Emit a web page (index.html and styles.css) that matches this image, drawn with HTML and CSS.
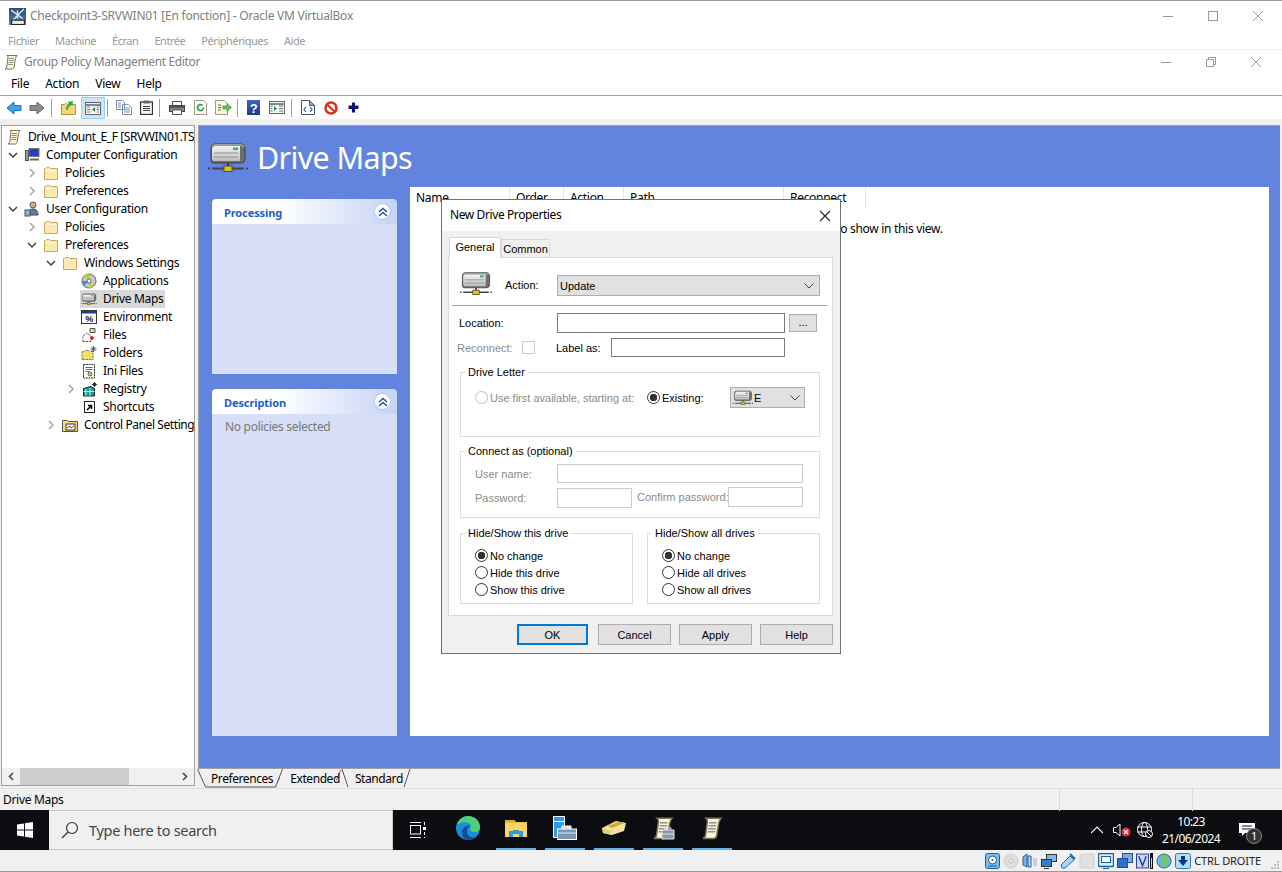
FILE: index.html
```html
<!DOCTYPE html>
<html lang="en">
<head>
<meta charset="utf-8">
<title>Drive Maps</title>
<link rel="stylesheet" href="styles.css">
</head>
<body>
<svg class="defs" width="0" height="0">
  <defs>
    <linearGradient id="drive-face" x1="0" y1="0" x2="0" y2="1"><stop offset="0" stop-color="#f4f4f4"/><stop offset="1" stop-color="#bdbdbd"/></linearGradient>
    <linearGradient id="logo-sky" x1="0" y1="0" x2="0" y2="1"><stop offset="0" stop-color="#2d4a6e"/><stop offset="1" stop-color="#4a7fb0"/></linearGradient>
    <linearGradient id="help-blue" x1="0" y1="0" x2="0" y2="1"><stop offset="0" stop-color="#3f62c4"/><stop offset="1" stop-color="#1d3a8f"/></linearGradient>
    <symbol id="drive" viewBox="0 0 40 30">
      <path d="M3 6q0-4 4-4h26q4 0 4 4v11q0 4-4 4H6q-3 0-3-3z" fill="#6f6f6f" stroke="#3c3c3c"/>
      <path d="M4 7q0-3 3-3h25v15H6q-2 0-2-2z" fill="url(#drive-face)"/>
      <path d="M4 5q1-2 3-2h26q2 0 3 2" fill="none" stroke="#9c9c9c" stroke-width="2"/>
      <path d="M6 11h24M6 15h24" stroke="#8f8f8f"/>
      <rect x="25" y="5.500" width="5" height="2.500" fill="#1fc24a"/>
      <path d="M20 21v4" stroke="#333" stroke-width="2"/>
      <path d="M0 26.500h2M4 26.500h32M38 26.500h2" stroke="#444" stroke-width="2"/>
      <rect x="16" y="24" width="8" height="5.500" fill="#d8c030" stroke="#5f5010"/>
    </symbol>
    <symbol id="folder" viewBox="0 0 16 16">
      <path d="M1.500 14.500v-11h1l1-1h3l1 1h7v11z" fill="#fbe9b0" stroke="#c9a95c"/>
      <path d="M2 5.500h12" stroke="#fff6d5"/>
    </symbol>
    <symbol id="scroll" viewBox="0 0 16 16">
      <path d="M4 1.500h10c-1 1-1 2-1.500 3L11 13.500c-.3 1-1 1.500-2 1.500H2c1-.5 1.500-1 1.700-2L5 3.500C5 2.500 4.600 2 4 1.500z" fill="#fbf5d8" stroke="#7a7658"/>
      <path d="M6 4.500h5M5.700 6.500h5M5.400 8.500h5M5.100 10.500h5" stroke="#8f8f8f"/>
    </symbol>
    <symbol id="twist-open" viewBox="0 0 16 16">
      <path d="M4 6l4 4 4-4" fill="none" stroke="#404040" stroke-width="1.500"/>
    </symbol>
    <symbol id="twist-closed" viewBox="0 0 16 16">
      <path d="M6 4l4 4-4 4" fill="none" stroke="#a6a6a6" stroke-width="1.500"/>
    </symbol>
  </defs>
</svg>

<div class="screen">
  <header class="vb-title">
    <svg class="vb-logo" viewBox="0 0 16 16" width="17" height="17"><rect width="16" height="16" fill="url(#logo-sky)"/><path d="M2 2l11 8M14 1L4 11M8 2v8" stroke="#d3e6f7" stroke-width="1.300"/><rect x="2" y="11" width="13" height="5" fill="#222"/><rect x="3" y="12" width="11" height="3" fill="#e8e8e8"/></svg>
    <span class="vb-name">Checkpoint3-SRVWIN01 [En fonction] - Oracle VM VirtualBox</span>
    <div class="win-btns vb-btns">
      <svg viewBox="0 0 12 12" width="12" height="12"><path d="M1 6.500h10" stroke="#999"/></svg>
      <svg viewBox="0 0 12 12" width="12" height="12"><rect x="1.500" y="1.500" width="9" height="9" fill="none" stroke="#999"/></svg>
      <svg viewBox="0 0 12 12" width="12" height="12"><path d="M1 1l10 10M11 1L1 11" stroke="#999"/></svg>
    </div>
  </header>
  <nav class="vb-menu">
    <span>Fichier</span><span>Machine</span><span>Écran</span><span>Entrée</span><span>Périphériques</span><span>Aide</span>
  </nav>

  <header class="gp-title">
    <svg width="16" height="16"><use href="#scroll"/></svg>
    <span class="gp-name">Group Policy Management Editor</span>
    <div class="win-btns gp-btns">
      <svg viewBox="0 0 12 12" width="12" height="12"><path d="M1 6.500h10" stroke="#999"/></svg>
      <svg viewBox="0 0 12 12" width="12" height="12"><path d="M1.500 3.500h7v7h-7zM3.500 3.500v-2h7v7h-2" fill="none" stroke="#999"/></svg>
      <svg viewBox="0 0 12 12" width="12" height="12"><path d="M1 1l10 10M11 1L1 11" stroke="#999"/></svg>
    </div>
  </header>
  <nav class="gp-menu">
    <span>File</span><span>Action</span><span>View</span><span>Help</span>
  </nav>

  <div class="toolbar">
    <span class="tb t1"><svg viewBox="0 0 16 14" width="16" height="14"><path d="M8 1L1 7l7 6V9.500h7v-5H8z" fill="#3fa5ea" stroke="#1f6fb5"/></svg></span>
    <span class="tb t2"><svg viewBox="0 0 16 14" width="16" height="14"><path d="M8 1l7 6-7 6V9.500H1v-5h7z" fill="#8c8c8c" stroke="#666"/></svg></span>
    <i class="tsep"></i>
    <span class="tb t3"><svg viewBox="0 0 15 15" width="15" height="15"><path d="M.5 14.500v-10h3l1-1h1l1 1h8v10z" fill="#f3d67a" stroke="#b4923f"/><path d="M5 10c0-3 1-5 3-6L6.500 2 12 1l-.5 5L10 5C8 6 7 8 6.500 10z" fill="#37a84a"/></svg></span>
    <span class="tb t4"><svg viewBox="0 0 16 13" width="16" height="13"><rect x=".5" y=".5" width="15" height="12" fill="#f4f4f4" stroke="#666"/><path d="M.5 3h15" stroke="#7a8a9a" stroke-width="2"/><path d="M10 5L7 7.500 10 10z" fill="#2e8b57"/><path d="M2 5h3M2 7.500h3M2 10h3M12 5h2M12 7.500h2M12 10h2" stroke="#777"/></svg></span>
    <i class="tsep"></i>
    <span class="tb t5"><svg viewBox="0 0 16 15" width="16" height="15"><path d="M.5.500h6l2 2v7h-8zM6.500 4.500h6l3 3v7h-9z" fill="#fff" stroke="#7f8ea3"/><path d="M2 3h3M2 5h3M2 7h3M8 8h6M8 10h6M8 12h6" stroke="#6a9bc8"/></svg></span>
    <span class="tb t6"><svg viewBox="0 0 13 15" width="13" height="15"><rect x=".5" y="2" width="12" height="12.500" fill="#f7f7f7" stroke="#333" stroke-width="1.300"/><rect x="3.500" y=".5" width="6" height="3" fill="#666"/><path d="M3 6.500h7M3 8.500h7M3 10.500h7" stroke="#444"/></svg></span>
    <i class="tsep"></i>
    <span class="tb t7"><svg viewBox="0 0 16 14" width="16" height="14"><rect x="3.500" y=".5" width="9" height="4" fill="#fff" stroke="#555"/><rect x=".5" y="4.500" width="15" height="6" fill="#8a8a8a" stroke="#444"/><path d="M1 6h14" stroke="#555" stroke-width="2"/><rect x="3.500" y="9" width="9" height="4.500" fill="#fff" stroke="#555"/></svg></span>
    <span class="tb t8"><svg viewBox="0 0 13 15" width="13" height="15"><path d="M.5.500h9l3 3v11H.5z" fill="#fff" stroke="#9c9c7c"/><path d="M9.500 7.500a3 3 0 1 1-1-2.200" fill="none" stroke="#2f9e44" stroke-width="1.700"/></svg></span>
    <span class="tb t9"><svg viewBox="0 0 17 15" width="17" height="15"><path d="M.5.500h9l3 3v11H.5z" fill="#fbf6d9" stroke="#9c9c7c"/><path d="M3 5h3M3 7.500h3M3 10h3" stroke="#666"/><path d="M8 6h4V3.500l4.500 4-4.500 4V9H8z" fill="#5fbf5a" stroke="#3d8f3a" stroke-width=".6"/></svg></span>
    <i class="tsep"></i>
    <span class="tb t10"><svg viewBox="0 0 13 15" width="13" height="15"><rect width="13" height="15" fill="url(#help-blue)"/><text x="6.500" y="12.500" class="qmark" text-anchor="middle">?</text></svg></span>
    <span class="tb t11"><svg viewBox="0 0 16 13" width="16" height="13"><rect x=".5" y=".5" width="15" height="12" fill="#f4f4f4" stroke="#666"/><path d="M.5 3h15" stroke="#7a8a9a" stroke-width="2"/><path d="M5 5l3 2.500L5 10z" fill="#2e8b57"/><path d="M1.500 5h2M1.500 7.500h2M1.500 10h2M10 5h4M10 7.500h4M10 10h4" stroke="#777"/></svg></span>
    <i class="tsep"></i>
    <span class="tb t12"><svg viewBox="0 0 14 15" width="14" height="15"><path d="M.5.500h8l5 5v9H.5z" fill="#fff" stroke="#44557a"/><path d="M8.500.5v5h5z" fill="#8fb4e6" stroke="#44557a"/><path d="M5 7L3 9.500 5 12M9 7l2 2.500L9 12" fill="none" stroke="#2d4fa8" stroke-width="1.200"/></svg></span>
    <span class="tb t13"><svg viewBox="0 0 14 14" width="14" height="14"><circle cx="7" cy="7" r="5.500" fill="#fff" stroke="#d9301a" stroke-width="2.500"/><path d="M3 3.500l7.500 7" stroke="#d9301a" stroke-width="2.200"/></svg></span>
    <span class="tb t14"><svg viewBox="0 0 11 11" width="11" height="11"><path d="M4 .5h3v3h3.500v3.500H7v3.500H4V7H.5V3.500H4z" fill="#10107c"/></svg></span>
  </div>

  <main class="workspace">
    <aside class="tree-pane">
      <div class="tree">
        <div class="row root"><span class="node"><svg width="16" height="16"><use href="#scroll"/></svg><span class="label tight">Drive_Mount_E_F [SRVWIN01.TS</span></span></div>
        <div class="row l1"><svg class="twist" width="16" height="16"><use href="#twist-open"/></svg><span class="node"><svg viewBox="0 0 16 16" width="16" height="16"><rect x="5" y="1.500" width="10" height="8" fill="#1c3fd0" stroke="#777"/><rect x="1.500" y="3.500" width="3" height="10" fill="#999" stroke="#555"/><path d="M6 12.500h9" stroke="#666" stroke-width="2"/></svg><span class="label">Computer Configuration</span></span></div>
        <div class="row l2"><svg class="twist" width="16" height="16"><use href="#twist-closed"/></svg><span class="node"><svg width="16" height="16"><use href="#folder"/></svg><span class="label">Policies</span></span></div>
        <div class="row l2"><svg class="twist" width="16" height="16"><use href="#twist-closed"/></svg><span class="node"><svg width="16" height="16"><use href="#folder"/></svg><span class="label">Preferences</span></span></div>
        <div class="row l1"><svg class="twist" width="16" height="16"><use href="#twist-open"/></svg><span class="node"><svg viewBox="0 0 16 16" width="16" height="16"><circle cx="9" cy="4" r="3" fill="#d8a888" stroke="#555"/><path d="M4 14c0-4 2-6 5-6s5 2 5 6z" fill="#5d7f9c" stroke="#444"/><rect x="1" y="9" width="5" height="6" fill="#8fb4d4" stroke="#456"/></svg><span class="label">User Configuration</span></span></div>
        <div class="row l2"><svg class="twist" width="16" height="16"><use href="#twist-closed"/></svg><span class="node"><svg width="16" height="16"><use href="#folder"/></svg><span class="label">Policies</span></span></div>
        <div class="row l2"><svg class="twist" width="16" height="16"><use href="#twist-open"/></svg><span class="node"><svg width="16" height="16"><use href="#folder"/></svg><span class="label">Preferences</span></span></div>
        <div class="row l3"><svg class="twist" width="16" height="16"><use href="#twist-open"/></svg><span class="node"><svg width="16" height="16"><use href="#folder"/></svg><span class="label">Windows Settings</span></span></div>
        <div class="row l4"><span class="node"><svg viewBox="0 0 16 16" width="16" height="16"><circle cx="8" cy="8" r="7" fill="#c8c8c8" stroke="#666"/><path d="M8 8L3 3a7 7 0 0 1 5-2zM8 8l5 5a7 7 0 0 1-5 2z" fill="#b5d63a"/><path d="M8 8L1 8a7 7 0 0 0 2 5z" fill="#3a8fd6"/><circle cx="8" cy="8" r="2" fill="#fff" stroke="#666"/></svg><span class="label">Applications</span></span></div>
        <div class="row l4"><span class="node sel"><svg width="16" height="12"><use href="#drive"/></svg><span class="label">Drive Maps</span></span></div>
        <div class="row l4"><span class="node"><svg viewBox="0 0 16 16" width="16" height="16"><rect x=".5" y="1.500" width="15" height="13" fill="#fff" stroke="#333"/><rect x="1" y="2" width="14" height="2.500" fill="#1b3fa0"/><text x="8" y="13" class="pct" text-anchor="middle">%</text></svg><span class="label">Environment</span></span></div>
        <div class="row l4"><span class="node"><svg viewBox="0 0 16 16" width="16" height="16"><path d="M9 1.500h5v4H9z" fill="#f3d67a" stroke="#555"/><path d="M2 14.500V9l4-3 4 3v5.500z" fill="#fff" stroke="#555" stroke-dasharray="2 1"/><path d="M11 9v4M9 11h4" stroke="#e01010" stroke-width="1.500"/></svg><span class="label">Files</span></span></div>
        <div class="row l4"><span class="node"><svg viewBox="0 0 16 16" width="16" height="16"><path d="M1 14.500v-8h2l1-1h4l1 1h3v8z" fill="#f3e06a" stroke="#666" stroke-dasharray="2 1"/><path d="M12.500 1v6M9.500 4h6M10.500 2l4 4M14.500 2l-4 4" stroke="#555"/></svg><span class="label">Folders</span></span></div>
        <div class="row l4"><span class="node"><svg viewBox="0 0 16 16" width="16" height="16"><rect x="2.500" y="1.500" width="11" height="13.500" fill="#fff" stroke="#333" stroke-dasharray="2 .6"/><path d="M4.500 4.500h7M4.500 6.500h7M4.500 8.500h4" stroke="#666"/><circle cx="9" cy="11" r="2" fill="#e3c92e" stroke="#665"/></svg><span class="label">Ini Files</span></span></div>
        <div class="row l4 l4-twist"><svg class="twist" width="16" height="16"><use href="#twist-closed"/></svg><span class="node reg"><svg viewBox="0 0 16 16" width="16" height="16"><path d="M1.500 7.500l7-2 4 2v7.500h-11z" fill="#1f9a9a" stroke="#222"/><path d="M4 8v7M8 7v8M1.500 10.500h11" stroke="#9fe"/><path d="M12.500 1v5M10 3.500h5M11 2l3 3M14 2l-3 3" stroke="#333"/></svg><span class="label">Registry</span></span></div>
        <div class="row l4"><span class="node"><svg viewBox="0 0 16 16" width="16" height="16"><rect x="3.500" y="2.500" width="10" height="11" fill="#fff" stroke="#222"/><path d="M6 11l4-4M7 6.500h3.500V10" fill="none" stroke="#000" stroke-width="1.500"/></svg><span class="label">Shortcuts</span></span></div>
        <div class="row l3"><svg class="twist" width="16" height="16"><use href="#twist-closed"/></svg><span class="node"><svg viewBox="0 0 16 16" width="16" height="16"><path d="M.5 14.500v-11h5l1 1h9v10z" fill="#f3e07a" stroke="#555"/><rect x="4" y="7" width="9" height="6" fill="#fff" stroke="#333"/><path d="M5 11l3-2 1 2 3-2" stroke="#c22" fill="none"/></svg><span class="label tight">Control Panel Setting</span></span></div>
      </div>
      <div class="hscroll">
        <svg viewBox="0 0 18 17" width="18" height="17"><path d="M11 5L7.500 8.500 11 12" fill="none" stroke="#404040" stroke-width="1.500"/></svg>
        <div class="track"><div class="thumb"></div></div>
        <svg viewBox="0 0 18 17" width="18" height="17"><path d="M7 5l3.500 3.500L7 12" fill="none" stroke="#404040" stroke-width="1.500"/></svg>
      </div>
    </aside>

    <section class="content">
      <div class="blue">
        <div class="ext-head">
          <svg width="40" height="30"><use href="#drive"/></svg>
          <h1>Drive Maps</h1>
        </div>
        <div class="ext-body">
          <div class="tasks">
            <div class="task-head"><span>Processing</span><i class="collapse"><svg viewBox="0 0 10 10" width="10" height="10"><path d="M1 5l4-3.500L9 5M1 9l4-3.500L9 9" fill="none" stroke="#1f4fa8" stroke-width="1.400"/></svg></i></div>
            <div class="task-body proc"></div>
            <div class="task-head desc"><span>Description</span><i class="collapse"><svg viewBox="0 0 10 10" width="10" height="10"><path d="M1 5l4-3.500L9 5M1 9l4-3.500L9 9" fill="none" stroke="#1f4fa8" stroke-width="1.400"/></svg></i></div>
            <div class="task-body fill"><p>No policies selected</p></div>
          </div>
          <div class="list">
            <div class="cols">
              <span class="c-name">Name</span><span class="c-order">Order</span><span class="c-action">Action</span><span class="c-path">Path</span><span class="c-rec">Reconnect</span>
            </div>
            <p class="empty">There are no items to show in this view.</p>
          </div>
        </div>
      </div>
      <div class="sheet-tabs">
        <svg class="tab-shape" viewBox="0 0 215 20" width="215" height="20"><path d="M.5 0l8 18h70l7-18M145 0l6 18M213 0l-6 18" fill="none" stroke="#555"/><path d="M78.500 18l4-9M144 1l-5 11" fill="none" stroke="#777"/></svg>
        <span class="st st1">Preferences</span><span class="st st2">Extended</span><span class="st st3">Standard</span>
      </div>
    </section>
  </main>

  <footer class="statusbar">
    <span class="st-text">Drive Maps</span><i class="st-div d1"></i><i class="st-div d2"></i>
  </footer>

  <div class="taskbar">
    <div class="start"><svg viewBox="0 0 16 16" width="16" height="16"><path d="M0 2.500l7-1v6H0zM8 1.300L16 0v7.500H8zM0 8.500h7v6l-7-1zM8 8.500h8V16l-8-1.300z" fill="#fff"/></svg></div>
    <div class="search"><svg viewBox="0 0 18 18" width="18" height="18"><circle cx="11" cy="7" r="5.500" fill="none" stroke="#333" stroke-width="1.200"/><path d="M7 11l-6 6" stroke="#333" stroke-width="1.200"/></svg><span>Type here to search</span></div>
    <div class="taskview"><svg viewBox="0 0 16 16" width="16" height="16"><path d="M0 .5h11M0 15.500h11M14 .5h1M14 15.500h1" stroke="#fff"/><rect x=".5" y="3.500" width="10" height="8.500" fill="none" stroke="#fff"/><rect x="13" y="5" width="3" height="3" fill="#fff"/><path d="M14.500 10v3M14.500 1v2" stroke="#fff"/></svg></div>
    <div class="apps">
      <span class="app plain"><svg viewBox="0 0 24 24" width="24" height="24"><circle cx="12" cy="12" r="12" fill="#1b8ed8"/><path d="M1 9C3 2 9 0 12 0c7 0 12 5 12 11 0 3-2 5-5 5-3 0-5-1-5-3 0-1 1-2 1-3-1-3-4-4-7-4S3 8 1 9z" fill="#4fd178"/><path d="M12 24c-5 0-7-5-6-9 1-3 4-6 8-5-2 1-3 3-3 6 0 4 4 6 8 5-2 2-4 3-7 3z" fill="#134f94"/></svg></span>
      <span class="app"><svg viewBox="0 0 22 18" width="22" height="18"><path d="M0 1h9l2 2h11v15H0z" fill="#f9d566"/><path d="M0 1h9l2 2H0z" fill="#e3a92d"/><rect x="0" y="3" width="22" height="1" fill="#f0b93c"/><path d="M4 18v-6h4v-1h6v1h4v6h-4v-3H8v3z" fill="#2e9be0"/></svg></span>
      <span class="app"><svg viewBox="0 0 24 24" width="24" height="24"><path d="M.5.500h11v21H.5z" fill="#2f9ae6" stroke="#fff"/><path d="M1 5.500h10" stroke="#fff"/><rect x="4.500" y="13" width="19" height="10.500" fill="#7b9ab3" stroke="#fff"/><path d="M9 13v-3h9v3" fill="#dce6ee" stroke="#fff"/><path d="M5 17h18" stroke="#dce6ee"/></svg></span>
      <span class="app"><svg viewBox="0 0 24 14" width="24" height="14"><path d="M0 7L14 0l10 2-2 8-12 4-9-2z" fill="#f3e2a0"/><path d="M6 5l10-4 6 1-12 5z" fill="#d4a824"/><path d="M0 7l10 3v4L1 12z" fill="#dcd48a"/></svg></span>
      <span class="app"><svg viewBox="0 0 24 24" width="24" height="24"><use href="#scroll"/><path d="M11 14h12v9H11z" fill="#8997a6" stroke="#dfe6ec"/><path d="M14 14v-2h6v2M11 18h12" fill="none" stroke="#dfe6ec"/></svg></span>
      <span class="app"><svg width="24" height="24"><use href="#scroll"/></svg></span>
    </div>
    <div class="tray">
      <svg class="chev" viewBox="0 0 12 8" width="12" height="8"><path d="M0 7l6-6 6 6" fill="none" stroke="#fff" stroke-width="1.200"/></svg>
      <span class="sound"><svg viewBox="0 0 18 14" width="18" height="14"><path d="M.5 4.500h2.500L7 1v12L3 9.500H.5z" fill="none" stroke="#fff"/><circle cx="13" cy="9" r="4.500" fill="#e02a3c"/><path d="M11 7l4 4M15 7l-4 4" stroke="#fff" stroke-width="1.200"/></svg></span>
      <svg class="globe" viewBox="0 0 16 16" width="16" height="16"><circle cx="7.500" cy="7.500" r="7" fill="none" stroke="#fff"/><ellipse cx="7.500" cy="7.500" rx="3" ry="7" fill="none" stroke="#fff"/><path d="M.5 5h14M.5 10h14" stroke="#fff"/><circle cx="12" cy="12" r="3.500" fill="#111" stroke="#fff"/><path d="M10 10l4 4" stroke="#fff"/></svg>
      <div class="clock"><span>10:23</span><span>21/06/2024</span></div>
      <span class="notif"><svg viewBox="0 0 16 14" width="16" height="14"><path d="M0 0h16v10H6l-3 3v-3H0z" fill="#fff"/><path d="M3 3h10M3 6h10" stroke="#111"/></svg><b>1</b></span>
    </div>
  </div>

  <div class="vb-status">
    <span class="si"><svg viewBox="0 0 15 16" width="15" height="16"><rect x=".5" y=".5" width="14" height="15" rx="2" fill="#7fbcea" stroke="#1c5f9e"/><circle cx="7.500" cy="7" r="4" fill="#fff" stroke="#1c5f9e"/><circle cx="7.500" cy="7" r="1" fill="#1c5f9e"/><path d="M3 13h9" stroke="#1c5f9e"/></svg></span>
    <span class="si"><svg viewBox="0 0 16 16" width="16" height="16"><circle cx="8" cy="8" r="7" fill="#dedede" stroke="#cdcdcd"/><circle cx="8" cy="8" r="2" fill="#f4f4f4" stroke="#bbb"/></svg></span>
    <span class="si"><svg viewBox="0 0 16 16" width="16" height="16"><path d="M1 4l4-3v13l-4-2z" fill="#78b5ea" stroke="#1c5f9e"/><path d="M6 3h3v11H6z" fill="#bcdcf5" stroke="#1c5f9e"/><path d="M11 6h4M11 8h4M11 10h4M11 12h4" stroke="#aaa"/></svg></span>
    <span class="si"><svg viewBox="0 0 16 16" width="16" height="16"><rect x="5.500" y="1.500" width="10" height="7" fill="#7fbcea" stroke="#333"/><rect x=".5" y="6.500" width="10" height="7" fill="#2f7fd0" stroke="#333"/><path d="M3 15.500h5" stroke="#333"/></svg></span>
    <span class="si"><svg viewBox="0 0 16 16" width="16" height="16"><path d="M1 12L10 3l4 4-9 8H2z" fill="#a8d4f5" stroke="#1c6fb5"/><path d="M10 1l5 5" stroke="#1c6fb5" stroke-width="2"/></svg></span>
    <span class="si"><svg viewBox="0 0 16 16" width="16" height="16"><path d="M1 3l2-2h12v14H1z" fill="#e0e0e0" stroke="#d0d0d0"/></svg></span>
    <span class="si"><svg viewBox="0 0 16 16" width="16" height="16"><rect x=".5" y=".5" width="15" height="13" rx="1" fill="#dcedfa" stroke="#1c5f9e" stroke-width="1.400"/><rect x="3.500" y="3.500" width="9" height="6" fill="#fff" stroke="#1c5f9e"/><path d="M5 15.500h6" stroke="#1c5f9e"/></svg></span>
    <span class="si"><svg viewBox="0 0 16 16" width="16" height="16"><rect x="5.500" y=".5" width="10" height="9" fill="#7fa9e6" stroke="#24508f"/><rect x=".5" y="5.500" width="10" height="9" fill="#2f6fd0" stroke="#24508f"/></svg></span>
    <span class="si vm"><svg viewBox="0 0 14 16" width="13" height="16"><rect x=".5" y=".5" width="13" height="15" fill="#c8d6f7" stroke="#24368f"/><path d="M3 3l4 10 4-10" fill="none" stroke="#24368f" stroke-width="1.500"/></svg><i class="meter"></i></span>
    <span class="si"><svg viewBox="0 0 16 16" width="16" height="16"><circle cx="8" cy="8" r="7" fill="#6fb4e8" stroke="#285f94"/><path d="M6 2l5 5-5 2 4 5" fill="none" stroke="#6fd13a" stroke-width="2.500"/></svg></span>
    <span class="si"><svg viewBox="0 0 16 16" width="16" height="16"><rect x=".5" y=".5" width="15" height="15" rx="2" fill="#b6dcf7" stroke="#2b7cc0"/><path d="M6 3h4v4h3l-5 6-5-6h3z" fill="#0f3a80"/></svg></span>
    <span class="hostkey">CTRL DROITE</span>
    <svg class="grip" viewBox="0 0 12 12" width="12" height="12"><path d="M9 2h2v2H9zM6 5h2v2H6zM9 5h2v2H9zM3 8h2v2H3zM6 8h2v2H6zM9 8h2v2H9z" fill="#bdbdbd"/></svg>
  </div>

  <div class="dialog">
    <div class="dlg-title"><span>New Drive Properties</span><svg viewBox="0 0 12 12" width="12" height="12"><path d="M1 1l10 10M11 1L1 11" stroke="#222" stroke-width="1.100"/></svg></div>
    <div class="dlg-body">
      <div class="tabs"><span class="tab active">General</span><span class="tab">Common</span></div>
      <div class="pane">
        <div class="act-row">
          <svg width="32" height="30"><use href="#drive"/></svg>
          <span class="act-label">Action:</span>
          <span class="combo wide"><span>Update</span><svg viewBox="0 0 10 6" width="10" height="6"><path d="M.5 .5L5 5 9.500 .5" fill="none" stroke="#444"/></svg></span>
        </div>
        <div class="rule"></div>
        <div class="loc-row">
          <span class="loc-label">Location:</span>
          <span class="input loc"></span>
          <span class="browse">...</span>
        </div>
        <div class="rec-row">
          <span class="rec-label off">Reconnect:</span>
          <span class="check"></span>
          <span class="lab-label">Label as:</span>
          <span class="input labelas"></span>
        </div>
        <fieldset class="fs fs-letter">
          <legend>Drive Letter</legend>
          <div class="letter-row">
            <span class="radio off"></span><span class="r1 off">Use first available, starting at:</span>
            <span class="radio on"></span><span class="r2">Existing:</span>
            <span class="combo small"><svg width="20" height="15"><use href="#drive"/></svg><span class="e">E</span><svg viewBox="0 0 10 6" width="10" height="6"><path d="M.5 .5L5 5 9.500 .5" fill="none" stroke="#444"/></svg></span>
          </div>
        </fieldset>
        <fieldset class="fs fs-conn">
          <legend>Connect as (optional)</legend>
          <div class="user-row"><span class="cl off">User name:</span><span class="input dis user"></span></div>
          <div class="pass-row"><span class="cl off">Password:</span><span class="input dis pass"></span><span class="conf off">Confirm password:</span><span class="input dis pass2"></span></div>
        </fieldset>
        <div class="hide-row">
          <fieldset class="fs fs-hide">
            <legend>Hide/Show this drive</legend>
            <div class="opt"><span class="radio on"></span>No change</div>
            <div class="opt"><span class="radio"></span>Hide this drive</div>
            <div class="opt"><span class="radio"></span>Show this drive</div>
          </fieldset>
          <fieldset class="fs fs-hide">
            <legend>Hide/Show all drives</legend>
            <div class="opt"><span class="radio on"></span>No change</div>
            <div class="opt"><span class="radio"></span>Hide all drives</div>
            <div class="opt"><span class="radio"></span>Show all drives</div>
          </fieldset>
        </div>
      </div>
      <div class="dlg-foot">
        <span class="btn ok">OK</span><span class="btn">Cancel</span><span class="btn">Apply</span><span class="btn">Help</span>
      </div>
    </div>
  </div>
</div>
</body>
</html>
```
FILE: styles.css
```css
* { box-sizing: border-box; }
html, body { margin: 0; padding: 0; overflow: hidden; }
body { font: 12px/16px "Noto Sans", "Open Sans", sans-serif; color: #000; background: #fff; }
.defs { position: absolute; }
.screen { position: relative; width: 1282px; height: 872px; display: flex; flex-direction: column; overflow: hidden; letter-spacing: -0.3px; }
svg { display: block; flex: none; }
i { font-style: normal; display: block; }

.vb-title { height: 30px; display: flex; align-items: center; padding: 1px 0 0 9px; border-top: 1px solid #999; background: #fff; }
.vb-name { margin-left: 4px; color: #808080; letter-spacing: -0.25px; }
.win-btns { margin-left: auto; display: flex; }
.vb-btns { gap: 33px; padding-right: 18px; }
.gp-btns { gap: 33px; padding-right: 20px; }
.vb-menu { height: 20px; display: flex; align-items: center; padding: 2px 0 0 8px; gap: 16px; color: #999; font-size: 11px; border-bottom: 1px solid #efefef; letter-spacing: -0.45px; }

.gp-title { height: 23px; display: flex; align-items: center; padding-left: 3px; color: #808080; background: #fff; }
.gp-name { margin-left: 5px; letter-spacing: -0.36px; }
.gp-menu { height: 23px; display: flex; align-items: center; padding-left: 11px; gap: 16px; border-bottom: 1px solid #a0a0a0; letter-spacing: -0.25px; }

.toolbar { height: 23px; display: flex; align-items: center; padding-left: 6px; background: #fff; position: relative; }
.tb { display: block; }
.tb.t2 { margin-left: 7px; }
.tsep { width: 1px; height: 18px; background: #a0a0a0; margin: 0 9px 0 6px; }
.tb.t3 { margin-left: 0; }
.tb.t4 { margin: 0; padding: 4px 3px; width: 24px; height: 22px; margin-left: 5px; background: #cce4f7; border: 1px solid #99d1ff; }
.t4 + .tsep { margin-left: 2px; margin-right: 8px; }
.tb.t6 { margin-left: 8px; }
.tb.t8 { margin-left: 9px; }
.tb.t9 { margin-left: 8px; }
.t9 + .tsep { margin-left: 5px; }
.tb.t11 { margin-left: 9px; }
.tb.t13 { margin-left: 9px; }
.tb.t14 { margin-left: 10px; }
.qmark { font: bold 13px "Liberation Sans", sans-serif; fill: #fff; }
.pct { font: bold 9px "Liberation Sans", sans-serif; fill: #111; }

.workspace { height: 669px; display: flex; background: #f0f0f0; padding: 6px 0 0 1px; }
.tree-pane { width: 194px; flex: none; background: #fff; border: 1px solid #a0a0a0; height: 661px; display: flex; flex-direction: column; }
.tree { flex: 1; overflow: hidden; padding-top: 2px; white-space: nowrap; min-height: 0; }
.row { height: 18px; display: flex; align-items: center; }
.root { padding-left: 3px; }
.l1 { padding-left: 3px; }
.l2 { padding-left: 22px; }
.l3 { padding-left: 41px; }
.l4 { padding-left: 78px; }
.l4-twist { padding-left: 61px; }
.twist { margin-right: 2px; }
.node { display: inline-flex; align-items: center; height: 18px; padding: 0 1px 0 1px; }
.label { margin-left: 6px; }
.reg .label { margin-left: 5px; }
.tight { letter-spacing: -0.42px; }
.sel { background: #d9d9d9; }
.hscroll { height: 17px; flex: none; display: flex; background: #f0f0f0; }
.track { flex: 1; }
.thumb { width: 109px; height: 17px; background: #cdcdcd; }

.content { flex: 1; margin-left: 3px; display: flex; flex-direction: column; min-width: 0; margin-right: 2px; }
.blue { height: 643px; background: #6384de; border: 1px solid #a0a0a0; border-width: 1px 0 0 1px; padding: 0 0 0 13px; }
.ext-head { height: 61px; display: flex; align-items: center; margin-left: -4px; padding-top: 1px; }
h1 { margin: 0 0 0 9px; font: 400 30.500px/40px "Noto Sans", sans-serif; color: #fff; letter-spacing: -0.65px; }
.ext-body { display: flex; align-items: flex-start; }
.tasks { width: 185px; height: 537px; margin-top: 12px; display: flex; flex-direction: column; }
.task-head { height: 25px; flex: none; display: flex; align-items: center; justify-content: space-between; padding: 0 7px 0 12px; border-radius: 4px 4px 0 0; background: linear-gradient(90deg, #fff 0%, #fff 35%, #c6d3f7 100%); color: #215dc6; font-weight: 700; font-size: 11px; letter-spacing: -0.1px; }
.task-head span { padding-top: 2px; }
.task-head.desc { margin-top: 15px; }
.collapse { width: 15px; height: 15px; border-radius: 50%; background: #fff; display: flex; align-items: center; justify-content: center; box-shadow: 0 0 2px #8fa3d8; }
.task-body { background: #d6dff7; }
.proc { height: 150px; }
.fill { flex: 1; color: #777; padding: 5px 13px; }
.task-body p { margin: 0; }
.list { width: 859px; height: 549px; margin-left: 13px; background: #fff; }
.cols { height: 22px; display: flex; align-items: flex-start; }
.cols span { display: block; height: 22px; padding: 3px 0 0 6px; border-right: 1px solid #e5e5e5; }
.c-name { width: 100px; }
.c-order { width: 54px; }
.c-action { width: 60px; }
.c-path { width: 160px; }
.c-rec { width: 82px; }
.empty { margin: 12px 0 0; padding-left: 323px; }

.sheet-tabs { height: 20px; position: relative; display: flex; padding: 2px 0 0 13px; background: #f0f0f0; font-size: 12px; border-top: 1px solid #a0a0a0; letter-spacing: -0.42px; }
.tab-shape { position: absolute; left: -1px; top: 0; }
.st { position: relative; display: block; }
.st2 { margin-left: 17px; }
.st3 { margin-left: 15px; }

.statusbar { height: 22px; display: flex; align-items: center; padding-left: 3px; background: #f0f0f0; border-top: 1px solid #e0e0e0; position: relative; }
.st-text { width: 1056px; }
.st-div { width: 1px; height: 22px; background: #d8d8d8; }
.d2 { margin-left: 132px; }

.taskbar { height: 40px; display: flex; align-items: center; background: #0b0d10; color: #fff; }
.start { width: 49px; height: 40px; display: flex; align-items: center; justify-content: center; }
.search { width: 344px; height: 40px; display: flex; align-items: center; gap: 10px; padding-left: 12px; background: #f0f0f0; border: 1px solid #c8c8c8; border-width: 1px 1px 1px 0; color: #444; font-size: 14.500px; }
.taskview { margin-left: 17px; }
.apps { display: flex; gap: 9px; margin-left: 61px; }
.app { width: 40px; height: 40px; display: flex; align-items: center; justify-content: center; border-bottom: 2px solid #62aeea; padding-bottom: 2px; }
.app.plain { border-bottom-color: transparent; margin-left: -39px; margin-right: -1px; }
.tray { margin-left: auto; display: flex; align-items: center; height: 40px; padding-right: 23px; }
.chev { margin-right: 10px; }
.sound { margin-right: 6px; }
.clock { width: 66px; margin-left: 5px; display: flex; flex-direction: column; align-items: center; line-height: 17px; font-size: 12px; letter-spacing: -0.6px; }
.notif { position: relative; margin-left: 15px; width: 20px; }
.notif b { position: absolute; left: 7px; top: 5px; width: 16px; height: 16px; border-radius: 50%; background: #333; border: 1px solid #888; font-weight: 400; font-size: 11px; line-height: 14px; text-align: center; color: #fff; }

.vb-status { height: 22px; display: flex; align-items: center; justify-content: flex-end; gap: 3px; padding-right: 2px; background: #f0f0f0; border-bottom: 1px solid #999; }
.si { display: flex; align-items: center; gap: 1px; }
.meter { width: 3px; height: 16px; background: linear-gradient(#111 30%, #d7e23a 30%); border: 1px solid #111; }
.hostkey { font-size: 11px; color: #222; letter-spacing: -0.1px; margin-right: 4px; }
.grip { align-self: flex-end; }

/* dialog floats over the console */
.dialog { position: absolute; left: 441px; top: 199px; width: 400px; height: 455px; background: #f0f0f0; border: 1px solid #707070; }
.dlg-title { height: 31px; background: #fff; display: flex; align-items: center; justify-content: space-between; padding: 0 9px 0 8px; letter-spacing: -0.4px; }
.dlg-title span { margin-top: -1px; }
.dlg-body { padding: 0 7px 0 6px; font: 11px/16px "Liberation Sans", sans-serif; letter-spacing: 0; }
.tabs { height: 26px; display: flex; align-items: flex-end; padding-left: 1px; }
.tab { display: block; height: 18px; width: 49px; text-align: center; background: #f0f0f0; border: 1px solid #d9d9d9; border-bottom: 0; margin-bottom: 0; line-height: 18px; }
.tab.active { background: #fff; width: 52px; height: 21px; margin-bottom: -1px; position: relative; line-height: 18px; }
.pane { height: 359px; width: 385px; background: #fff; border: 1px solid #d9d9d9; }

.input { display: block; background: #fff; border: 1px solid #7a7a7a; }
.input.dis { border-color: #cccccc; }
.combo { display: flex; align-items: center; background: #e1e1e1; border: 1px solid #adadad; }

.act-row { display: flex; align-items: flex-start; padding-left: 11px; margin-top: 10px; height: 30px; }
.act-label { width: 52px; margin: 9px 0 0 13px; }
.combo.wide { width: 263px; height: 21px; margin-top: 7px; padding: 1px 5px 0 2px; justify-content: space-between; }
.rule { width: 375px; height: 1px; margin: 7px 0 0 3px; background: #a0a0a0; }
.loc-row { display: flex; align-items: center; height: 20px; margin-top: 7px; padding-left: 10px; }
.loc-label { width: 98px; }
.input.loc { width: 228px; height: 20px; }
.browse { display: block; width: 28px; height: 18px; margin-left: 4px; background: #e1e1e1; border: 1px solid #adadad; text-align: center; line-height: 14px; }
.rec-row { display: flex; align-items: center; height: 19px; margin-top: 5px; padding-left: 8px; }
.rec-label { width: 65px; padding-top: 1px; }
.check { display: block; width: 13px; height: 13px; border: 1px solid #cccccc; }
.lab-label { width: 55px; margin-left: 21px; padding-top: 1px; }
.input.labelas { width: 174px; height: 19px; }
.off { color: #8a8a8a; }

.fs { margin: 0; padding: 0; min-width: 0; border: 1px solid #dcdcdc; white-space: nowrap; }
.fs legend { padding: 0 3px; margin-left: -10px; line-height: 16px; }
.fs-letter { width: 360px; margin: 7px 0 0 11px; padding: 7px 0 28px 14px; }
.letter-row { display: flex; align-items: center; height: 21px; }
.radio { display: block; flex: none; width: 13px; height: 13px; border: 1px solid #333; border-radius: 50%; background: #fff; margin-right: 2px; }
.radio.on { background: radial-gradient(circle, #333 0, #333 3.500px, #fff 4px); }
.radio.off { border-color: #bfbfbf; }
.r1 { width: 157px; }
.r2 { width: 68px; }
.combo.small { width: 75px; height: 21px; padding: 0 4px 0 2px; }
.combo.small .e { flex: 1; margin-left: 1px; }
.fs-conn { width: 360px; margin: 6px 0 0 11px; padding: 5px 0 9px 14px; }
.user-row { display: flex; align-items: center; height: 19px; }
.pass-row { display: flex; align-items: flex-end; height: 21px; margin-top: 4px; }
.cl { width: 82px; align-self: center; }
.input.user { width: 246px; height: 19px; }
.input.pass { width: 75px; height: 20px; }
.conf { margin-left: 5px; width: 91px; align-self: flex-start; padding-top: 2px; }
.input.pass2 { width: 75px; height: 20px; align-self: flex-start; }
.hide-row { display: flex; gap: 14px; margin: 7px 0 0 11px; }
.fs-hide { width: 173px; padding: 6px 0 5px 14px; }
.opt { display: flex; align-items: center; height: 17px; }
.dlg-foot { display: flex; justify-content: flex-end; gap: 8px; margin-top: 8px; }
.btn { display: block; width: 73px; height: 21px; background: #e1e1e1; border: 1px solid #adadad; text-align: center; line-height: 21px; }
.btn.ok { width: 71px; margin-right: 2px; border: 2px solid #0078d7; line-height: 19px; }
```
